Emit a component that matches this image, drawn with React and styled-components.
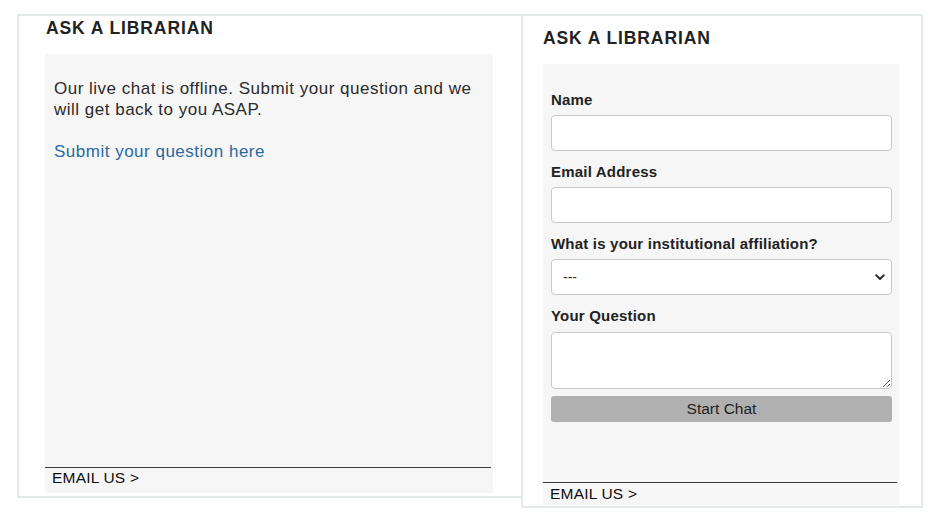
import styled, { createGlobalStyle } from "styled-components";

const GlobalStyle = createGlobalStyle`
  body {
    margin: 0;
    background: #fff;
    font-family: "Liberation Sans", Arial, sans-serif;
    color: #222;
  }
`;

const Page = styled.div`
  display: flex;
  align-items: flex-start;
  padding: 14px 0 0 17px;
`;

const Card = styled.section`
  box-sizing: border-box;
  display: flex;
  flex-direction: column;
  width: ${({ $width }) => $width}px;
  height: ${({ $height }) => $height}px;
  border: 2px solid #e4e9e9;
  border-right: ${({ $open }) => ($open ? "2px solid #e4e9e9" : "none")};
  padding: ${({ $open }) => ($open ? "12px 22px 1px 20px" : "2px 0 3px 26px")};
`;

const Title = styled.h2`
  margin: 0 0 16px ${({ $shift }) => $shift || 0}px;
  font-size: 17.5px;
  line-height: 20px;
  font-weight: 700;
  letter-spacing: 0.9px;
  color: #222;
`;

const Panel = styled.div`
  flex: 1;
  display: flex;
  flex-direction: column;
  background: #f6f6f6;
  width: ${({ $width }) => $width}px;
`;

const Body = styled.div`
  padding: 24px 9px 0;
`;

const Text = styled.p`
  margin: 0 0 21px;
  font-size: 17px;
  line-height: 21px;
  letter-spacing: 0.5px;
  color: #2b2b2b;
`;

const Link = styled.a`
  color: #2a69a2;
  text-decoration: none;
`;

const Footer = styled.div`
  margin-top: auto;
  margin-right: 2px;
  border-top: 1px solid #3a3a3a;
  padding: ${({ $pad }) => $pad};
  font-size: 15.5px;
  line-height: 18px;
  color: #0e0e0e;
  letter-spacing: 0.2px;
`;

const Form = styled.form`
  display: flex;
  flex-direction: column;
  padding: 27px 7px 0 8px;
`;

const Label = styled.label`
  display: block;
  margin: ${({ $first }) => ($first ? "0" : "12px")} 0 6px;
  font-size: 15px;
  line-height: 18px;
  font-weight: 700;
  letter-spacing: 0.2px;
  color: #222;
`;

const Input = styled.input`
  box-sizing: border-box;
  width: 100%;
  height: 36px;
  margin: 0;
  border: 1px solid #c9c9c9;
  border-radius: 4px;
  background: #fff;
  font: inherit;
`;

const SelectWrap = styled.div`
  position: relative;
`;

const Select = styled.select`
  box-sizing: border-box;
  width: 100%;
  height: 36px;
  margin: 0;
  padding: 0 30px 0 11px;
  appearance: none;
  border: 1px solid #c9c9c9;
  border-radius: 4px;
  background: #fff;
  font-family: "Liberation Sans", Arial, sans-serif;
  font-size: 14px;
  color: #333;
`;

const Chevron = styled.svg`
  position: absolute;
  right: 7px;
  top: 15px;
  pointer-events: none;
`;

const TextArea = styled.textarea`
  box-sizing: border-box;
  width: 100%;
  height: 57px;
  margin: 1px 0 0;
  border: 1px solid #c9c9c9;
  border-radius: 4px;
  background: #fff;
  font: inherit;
  display: block;
`;

const Button = styled.button`
  margin-top: 7px;
  height: 26px;
  border: none;
  border-radius: 3px;
  background: #b0b0b0;
  color: #1e1e1e;
  font-family: "Liberation Sans", Arial, sans-serif;
  font-size: 15.5px;
  padding: 0;
`;

export default function App() {
  return (
    <>
      <GlobalStyle />
      <Page>
        <Card $width={504} $height={484}>
          <Title $shift={1}>ASK A LIBRARIAN</Title>
          <Panel $width={448}>
            <Body>
              <Text>
                Our live chat is offline. Submit your question and we will get
                back to you ASAP.
              </Text>
              <Text>
                <Link href="#">Submit your question here</Link>
              </Text>
            </Body>
            <Footer $pad="1px 7px 6px">EMAIL US &gt;</Footer>
          </Panel>
        </Card>

        <Card $open $width={402} $height={494}>
          <Title>ASK A LIBRARIAN</Title>
          <Panel $width={356}>
            <Form onSubmit={(e) => e.preventDefault()}>
              <Label $first>Name</Label>
              <Input type="text" />
              <Label>Email Address</Label>
              <Input type="email" />
              <Label>What is your institutional affiliation?</Label>
              <SelectWrap>
                <Select defaultValue="">
                  <option value="">---</option>
                </Select>
                <Chevron width="10" height="7" viewBox="0 0 10 7">
                  <path
                    d="M1.2 1.3 L5 5 L8.8 1.3"
                    fill="none"
                    stroke="#333"
                    strokeWidth="2"
                    strokeLinecap="round"
                    strokeLinejoin="round"
                  />
                </Chevron>
              </SelectWrap>
              <Label>Your Question</Label>
              <TextArea />
              <Button type="submit">Start Chat</Button>
            </Form>
            <Footer $pad="2px 7px 2px">EMAIL US &gt;</Footer>
          </Panel>
        </Card>
      </Page>
    </>
  );
}
